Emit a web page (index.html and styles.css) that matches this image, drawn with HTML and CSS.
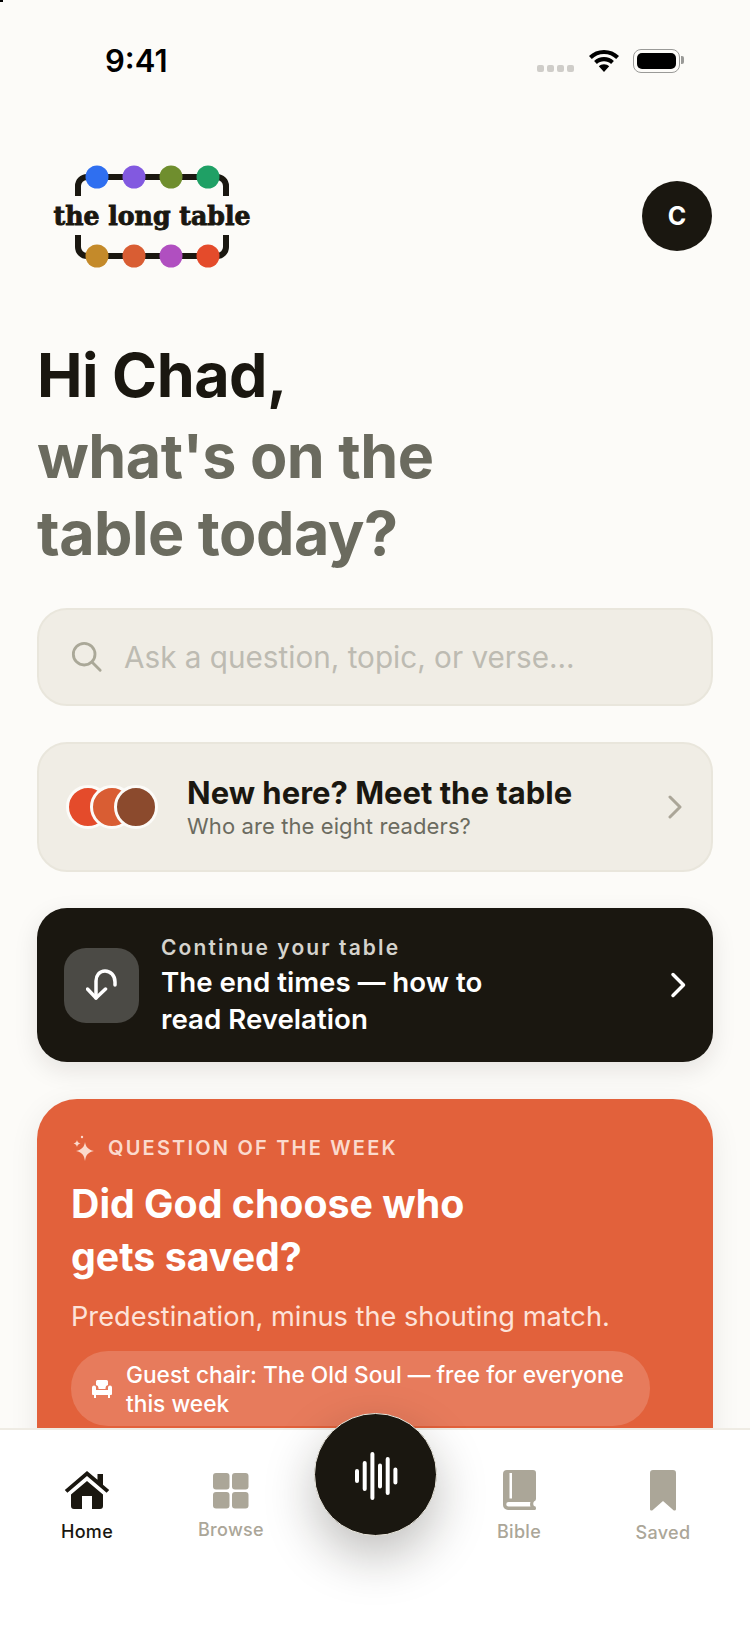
FILE: index.html
```html
<!DOCTYPE html>
<html lang="en">
<head>
    <meta charset="UTF-8">
    <title>The Long Table</title>
    <link rel="stylesheet" href="styles.css">
</head>
<body>
    <div class="app">
        <main class="content">
            <div class="status-bar">
                <span class="time">9:41</span>
                <div class="status-icons">
                    <div class="signal"><i></i><i></i><i></i><i></i></div>
                    <svg class="wifi" width="32" height="24" viewBox="0 0 32 24">
                        <path d="M16 1C10 1 5 3.200 1 7l2.800 3C7 6.900 11.200 5 16 5s9 1.900 12.200 5L31 7C27 3.200 22 1 16 1z"/>
                        <path d="M16 8c-3.900 0-7.300 1.400-9.900 3.900l2.800 3C10.700 13.200 13.200 12.200 16 12.200s5.300 1 7.100 2.700l2.800-3C23.300 9.400 19.900 8 16 8z"/>
                        <path d="M16 15.200c-2.100 0-3.900.800-5.200 2L16 23l5.200-5.800c-1.300-1.200-3.100-2-5.200-2z"/>
                    </svg>
                    <div class="battery"><div class="battery-fill"></div></div>
                </div>
            </div>

            <header class="top-row">
                <svg class="logo" width="210" height="120" viewBox="0 0 210 120">
                    <path class="logo-line" d="M25 41V31a9 9 0 0 1 9-9h130a9 9 0 0 1 9 9v10"/>
                    <path class="logo-line" d="M25 80v12a9 9 0 0 0 9 9h130a9 9 0 0 0 9-9V80"/>
                    <circle cx="44" cy="22" r="11.500" fill="#2f6ff0"/>
                    <circle cx="81" cy="22" r="11.500" fill="#8259e0"/>
                    <circle cx="118" cy="22" r="11.500" fill="#6f8e2e"/>
                    <circle cx="155" cy="22" r="11.500" fill="#1fa065"/>
                    <circle cx="44" cy="101" r="11.500" fill="#c48a2a"/>
                    <circle cx="81" cy="101" r="11.500" fill="#d95d33"/>
                    <circle cx="118" cy="101" r="11.500" fill="#b04fc0"/>
                    <circle cx="155" cy="101" r="11.500" fill="#e44b2b"/>
                    <text class="logo-text" x="99" y="70" text-anchor="middle" textLength="197" lengthAdjust="spacingAndGlyphs">the long table</text>
                </svg>
                <div class="avatar">C</div>
            </header>

            <h1 class="greeting">
                <span class="hi">Hi Chad,</span>
                <span class="ask">what's on the<br>table today?</span>
            </h1>

            <div class="search">
                <svg width="32" height="32" viewBox="0 0 34 34" fill="none" stroke="#aaa898" stroke-width="3" stroke-linecap="round">
                    <circle cx="14" cy="14" r="11.500"/>
                    <path d="M22.500 22.500 31 31"/>
                </svg>
                <span class="placeholder">Ask a question, topic, or verse...</span>
            </div>

            <div class="meet-card">
                <div class="dots">
                    <i class="dot-a"></i><i class="dot-b"></i><i class="dot-c"></i>
                </div>
                <div class="meet-text">
                    <div class="meet-title">New here? Meet the table</div>
                    <div class="meet-sub">Who are the eight readers?</div>
                </div>
                <svg class="chevron" width="16" height="24" viewBox="0 0 16 24" fill="none" stroke="#aba698" stroke-width="3" stroke-linecap="round" stroke-linejoin="round">
                    <path d="M3 2l10 10L3 22"/>
                </svg>
            </div>

            <div class="continue-card">
                <div class="continue-icon">
                    <svg width="32" height="32" viewBox="0 0 32 32" fill="none" stroke="#fff" stroke-width="3.500" stroke-linecap="round" stroke-linejoin="round">
                        <path d="M29 16v-3C29 6.500 24.500 2 19 2S10 6.500 10 12v17"/>
                        <path d="M1.500 20 10 29l9.500-9"/>
                    </svg>
                </div>
                <div class="continue-text">
                    <div class="continue-label">Continue your table</div>
                    <div class="continue-title">The end times — how to<br>read Revelation</div>
                </div>
                <svg class="chevron" width="18" height="26" viewBox="0 0 18 26" fill="none" stroke="#fff" stroke-width="3.500" stroke-linecap="round" stroke-linejoin="round">
                    <path d="M4 2.500 14.500 13 4 23.500"/>
                </svg>
            </div>

            <section class="week-card">
                <div class="week-label">
                    <svg width="24" height="26" viewBox="0 0 24 26" fill="#fbdacd">
                        <path d="M14 7c.8 5 3 7.500 9 9-6 1.500-8.200 4-9 10-.8-6-3-8.500-9-10 6-1.500 8.200-4 9-9z"/>
                        <path d="M6 5c.4 2 1.300 3 3.500 3.500C7.300 9 6.400 10 6 12c-.4-2-1.300-3-3.500-3.500C4.700 8 5.600 7 6 5z"/>
                        <circle cx="11" cy="2" r="1.200"/>
                    </svg>
                    <span>QUESTION OF THE WEEK</span>
                </div>
                <h2 class="week-title">Did God choose who<br>gets saved?</h2>
                <p class="week-sub">Predestination, minus the shouting match.</p>
                <div class="guest-pill">
                    <svg width="20" height="18" viewBox="0 0 20 18" fill="#fff">
                        <path d="M4 1.500A1.500 1.500 0 0 1 5.500 0h9A1.500 1.500 0 0 1 16 1.500V5a3 3 0 0 0-2.500 3v1h-7V8A3 3 0 0 0 4 5z"/>
                        <path d="M0 7.500a2 2 0 0 1 4 0V10h12V7.500a2 2 0 0 1 4 0V14a1 1 0 0 1-1 1h-1v3h-2v-3H4v3H2v-3H1a1 1 0 0 1-1-1z"/>
                    </svg>
                    <span>Guest chair: The Old Soul — free for everyone this week</span>
                </div>
            </section>
        </main>

        <nav class="tabbar">
            <div class="tab active">
                <svg width="46" height="40" viewBox="0 0 46 40">
                    <path d="M23 1 .800 20l2.600 2.800L23 6l19.600 16.800 2.600-2.800-6.200-5.300V4h-5.500v5.800z"/>
                    <path d="M7 24.500 23 11l16 13.500V36a3 3 0 0 1-3 3H10a3 3 0 0 1-3-3zM18 26v13h10V26z" fill-rule="evenodd"/>
                </svg>
                <span>Home</span>
            </div>
            <div class="tab browse">
                <svg width="36" height="36" viewBox="0 0 36 36">
                    <rect x="0" y="0" width="16.500" height="16.500" rx="3"/>
                    <rect x="19" y="0" width="16.500" height="16.500" rx="3"/>
                    <rect x="0" y="19" width="16.500" height="16.500" rx="3"/>
                    <rect x="19" y="19" width="16.500" height="16.500" rx="3"/>
                </svg>
                <span>Browse</span>
            </div>
            <div class="tab-spacer"></div>
            <div class="tab">
                <svg width="33" height="40" viewBox="0 0 33 40">
                    <path fill-rule="evenodd" d="M4 0h26a3 3 0 0 1 3 3v26a2.500 2.500 0 0 1-2 2.400c-1 1.200-1 3.400 0 4.600a2 2 0 0 1 2 2v.500a1.500 1.500 0 0 1-1.500 1.500H5a5 5 0 0 1-5-5V4a4 4 0 0 1 4-4zm2.500 3v25.500H9V3zM5.500 32a2 2 0 0 0 0 4.500h22c-.6-1.400-.6-3.100 0-4.500z"/>
                </svg>
                <span>Bible</span>
            </div>
            <div class="tab">
                <svg width="26" height="41" viewBox="0 0 26 41">
                    <path d="M3 0h20a3 3 0 0 1 3 3v36a1.500 1.500 0 0 1-2.500 1.200L13 31 2.500 40.200A1.500 1.500 0 0 1 0 39V3a3 3 0 0 1 3-3z"/>
                </svg>
                <span>Saved</span>
            </div>
        </nav>

        <div class="mic">
            <svg class="wave" width="46" height="50" viewBox="0 0 46 50" fill="none" stroke="#fff" stroke-width="4" stroke-linecap="round">
                <path d="M4 20v10M11.700 12v26M19.400 3v44M27 14.500v21M34.700 8v34M42.400 18.500v13"/>
            </svg>
        </div>
    </div>
    <div class="corner-mark"></div>
</body>
</html>
```

FILE: styles.css
```css
* {
    box-sizing: border-box;
}
html, body {
    margin: 0;
    height: 100%;
}
body {
    font-family: Inter, "Liberation Sans", sans-serif;
    background-color: #fcfbf8;
    color: #1a1710;
}
.app {
    position: relative;
    width: 750px;
    height: 1630px;
    display: flex;
    flex-direction: column;
    overflow: hidden;
}
.corner-mark {
    position: absolute;
    left: 0;
    top: 0;
    width: 3px;
    height: 2px;
    background-color: #000;
}
.content {
    flex: 1;
    min-height: 0;
    overflow: hidden;
    padding: 0 37px;
}

/* status bar */
.status-bar {
    height: 181px;
    margin: 0 -37px;
    padding: 44px 70px 0 105px;
    display: flex;
    justify-content: space-between;
    align-items: flex-start;
}
.time {
    font-size: 31px;
    font-weight: 600;
    line-height: 34px;
    color: #000;
}
.status-icons {
    display: flex;
    align-items: flex-start;
    padding-top: 5px;
}
.signal {
    display: flex;
    gap: 3px;
    margin: 16px 14px 0 0;
}
.signal i {
    width: 7px;
    height: 7px;
    border-radius: 2px;
    background-color: #cfcdc9;
}
.wifi {
    fill: #000;
    margin-right: 13px;
}
.battery {
    position: relative;
    width: 47px;
    height: 24px;
    padding: 3px;
    border: 1.500px solid #9a9a98;
    border-radius: 8px;
}
.battery::after {
    content: "";
    position: absolute;
    right: -5px;
    top: 6px;
    width: 3px;
    height: 8px;
    border-radius: 0 2px 2px 0;
    background-color: #9a9a98;
}
.battery-fill {
    height: 100%;
    background-color: #000;
    border-radius: 5px;
}

/* logo row */
.top-row {
    display: flex;
    justify-content: space-between;
    align-items: flex-start;
    height: 151px;
}
.logo {
    flex: none;
    margin: -26px 0 0 16px;
}
.logo-line {
    fill: none;
    stroke: #1a1710;
    stroke-width: 6;
}
.logo-text {
    font-family: "DejaVu Serif", "Liberation Serif", serif;
    font-size: 26px;
    font-weight: 700;
    fill: #1a1710;
    stroke: #1a1710;
    stroke-width: 0.9;
}
.avatar {
    width: 70px;
    height: 70px;
    margin-right: 1px;
    border-radius: 50%;
    background-color: #1a1710;
    color: #fff;
    font-size: 25px;
    font-weight: 700;
    display: flex;
    align-items: center;
    justify-content: center;
}

/* greeting */
.greeting {
    margin: 0 0 36px;
    font-size: 61px;
    font-weight: 700;
    letter-spacing: -0.5px;
}
.hi {
    display: block;
    line-height: 86px;
}
.ask {
    display: block;
    line-height: 77px;
    color: #6b6b5f;
}

/* search */
.search {
    height: 98px;
    padding: 0 32px;
    display: flex;
    align-items: center;
    gap: 21px;
    background-color: #f0ede5;
    border: 2px solid #e9e6dc;
    border-radius: 30px;
}
.placeholder {
    font-size: 29.700px;
    color: #bdbbb2;
}

/* meet card */
.meet-card {
    height: 130px;
    margin-top: 36px;
    padding: 0 28px 0 27px;
    display: flex;
    align-items: center;
    background-color: #f0ede5;
    border: 2px solid #e9e6dc;
    border-radius: 30px;
}
.dots {
    display: flex;
    width: 121px;
    flex: none;
}
.dots i {
    width: 38px;
    height: 38px;
    flex: none;
    box-sizing: content-box;
    border: 3px solid #fcfbf8;
    border-radius: 50%;
    margin-right: -20px;
}
.dot-a { background-color: #e44b2b; }
.dot-b { background-color: #d95d33; }
.dot-c { background-color: #8b4a2d; }
.meet-text {
    flex: 1;
}
.meet-title {
    font-size: 31px;
    font-weight: 700;
    line-height: 38px;
}
.meet-sub {
    font-size: 22px;
    letter-spacing: 0.100px;
    line-height: 28px;
    color: #6b6b5f;
}

/* continue card */
.continue-card {
    height: 154px;
    margin-top: 36px;
    padding: 0 26px 0 27px;
    display: flex;
    align-items: center;
    gap: 22px;
    color: #fff;
    background-color: #1a1710;
    border-radius: 30px;
    box-shadow: 0 8px 24px rgba(26, 23, 16, 0.1);
}
.continue-icon {
    width: 75px;
    height: 75px;
    flex: none;
    display: flex;
    align-items: center;
    justify-content: center;
    background-color: #4b4a45;
    border-radius: 22px;
}
.continue-text {
    flex: 1;
}
.continue-label {
    font-size: 21px;
    font-weight: 600;
    line-height: 32px;
    letter-spacing: 2.100px;
    color: #d5d3cd;
}
.continue-title {
    font-size: 27.700px;
    font-weight: 600;
    line-height: 37px;
}

/* question of the week */
.week-card {
    margin-top: 37px;
    padding: 36px 34px 40px;
    color: #fff;
    background-color: #e2613b;
    border-radius: 40px 40px 0 0;
    box-shadow: 0 8px 30px rgba(26, 23, 16, 0.08);
}
.week-label {
    display: flex;
    align-items: center;
    gap: 13px;
    font-size: 20px;
    font-weight: 600;
    letter-spacing: 2.200px;
    color: #fbdacd;
}
.week-title {
    margin: 16px 0 0;
    font-size: 39.300px;
    font-weight: 700;
    line-height: 53px;
}
.week-sub {
    margin: 16px 0 0;
    font-size: 27.200px;
    line-height: 36px;
    color: #fde3d9;
}
.guest-pill {
    width: 579px;
    height: 75px;
    margin-top: 16px;
    padding: 0 20px 0 21px;
    display: flex;
    align-items: center;
    gap: 14px;
    font-size: 22.700px;
    font-weight: 500;
    line-height: 29px;
    background-color: rgba(255, 255, 255, 0.17);
    border-radius: 37px;
}
.guest-pill svg {
    flex: none;
}

/* tab bar */
.tabbar {
    flex: none;
    height: 202px;
    padding: 40px 15px 0;
    display: grid;
    grid-template-columns: repeat(5, 1fr);
    align-items: start;
    background-color: #fff;
    border-top: 2px solid #efece4;
}
.tab {
    display: flex;
    flex-direction: column;
    align-items: center;
    gap: 11px;
    font-size: 18px;
    font-weight: 500;
    letter-spacing: 0.300px;
    color: #aba698;
}
.tab svg {
    display: block;
    fill: #aba698;
}
.tab.active {
    color: #1a1710;
}
.tab.active svg {
    fill: #1a1710;
}
.tab.browse {
    padding-top: 3px;
    gap: 10px;
}
.mic {
    position: absolute;
    left: 314px;
    top: 1413px;
    width: 123px;
    height: 123px;
    display: flex;
    align-items: center;
    justify-content: center;
    background-color: #1a1710;
    border: 1.500px solid #e9e6dc;
    border-radius: 50%;
    box-shadow: 0 20px 50px rgba(26, 23, 16, 0.28);
}
.wave {
    margin-top: 3px;
}
```
